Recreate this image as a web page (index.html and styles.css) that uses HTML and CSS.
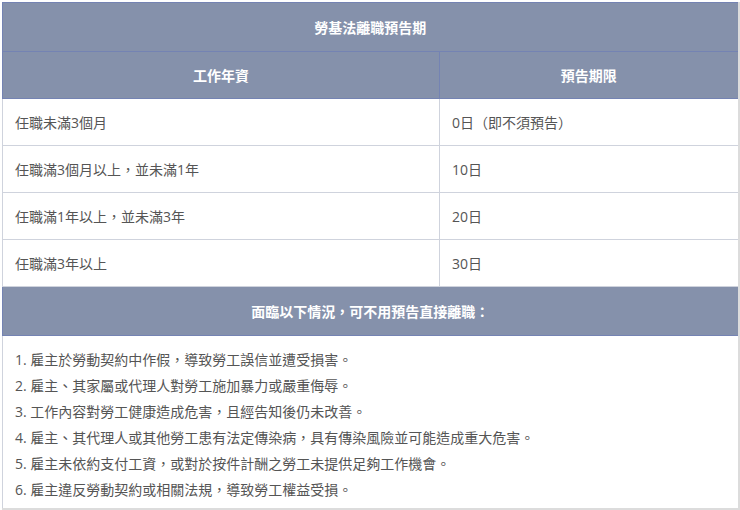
FILE: index.html
```html
<!DOCTYPE html>
<html lang="zh-TW">
<head>
<meta charset="utf-8">
<title>勞基法離職預告期</title>
<link rel="stylesheet" href="styles.css">
</head>
<body>
<div class="wrap">
<table class="notice">
  <colgroup><col class="c1"><col class="c2"></colgroup>
  <thead>
    <tr><th class="title" colspan="2">勞基法離職預告期</th></tr>
    <tr><th class="head">工作年資</th><th class="head">預告期限</th></tr>
  </thead>
  <tbody>
    <tr><td>任職未滿3個月</td><td>0日（即不須預告）</td></tr>
    <tr><td>任職滿3個月以上，並未滿1年</td><td>10日</td></tr>
    <tr><td>任職滿1年以上，並未滿3年</td><td>20日</td></tr>
    <tr><td>任職滿3年以上</td><td>30日</td></tr>
    <tr><th class="title" colspan="2">面臨以下情況，可不用預告直接離職：</th></tr>
    <tr>
      <td class="list" colspan="2">
        <ol class="items">
          <li>1. 雇主於勞動契約中作假，導致勞工誤信並遭受損害。</li>
          <li>2. 雇主、其家屬或代理人對勞工施加暴力或嚴重侮辱。</li>
          <li>3. 工作內容對勞工健康造成危害，且經告知後仍未改善。</li>
          <li>4. 雇主、其代理人或其他勞工患有法定傳染病，具有傳染風險並可能造成重大危害。</li>
          <li>5. 雇主未依約支付工資，或對於按件計酬之勞工未提供足夠工作機會。</li>
          <li>6. 雇主違反勞動契約或相關法規，導致勞工權益受損。</li>
        </ol>
      </td>
    </tr>
  </tbody>
</table>
</div>
</body>
</html>
```
FILE: styles.css
```css
html, body {
  margin: 0;
  padding: 0;
  background: #ffffff;
}
body {
  font-family: "Open Sans", "Noto Sans CJK HK", "Noto Sans TC", "Noto Sans CJK TC", sans-serif;
  font-size: 14px;
  color: #555555;
}
.wrap {
  padding: 2px 2px 0 2px;
}
.notice {
  width: 736px;
  border-collapse: collapse;
  table-layout: fixed;
  border-right: 2px solid #dcdcdc;
  border-bottom: 2px solid #dcdcdc;
}
.c1 { width: 437px; }
.c2 { width: 299px; }
th {
  background: #8591ab;
  color: #ffffff;
  font-weight: 700;
  font-size: 14px;
  line-height: 21px;
  text-align: center;
  border: 1px solid #7483b3;
}
.title {
  height: 48px;
  padding: 0;
}
.head {
  height: 46px;
  padding: 0;
}
td {
  height: 46px;
  padding: 0 12px;
  line-height: 21px;
  border: 1px solid #cfd3dd;
  vertical-align: middle;
  color: #555555;
}
td.list {
  padding: 11px 12px 5px 12px;
  height: auto;
  vertical-align: top;
  border-left: 1px solid #cfd3dd;
}
.items {
  list-style: none;
  margin: 0;
  padding: 0;
}
.items li {
  line-height: 26px;
}
```
